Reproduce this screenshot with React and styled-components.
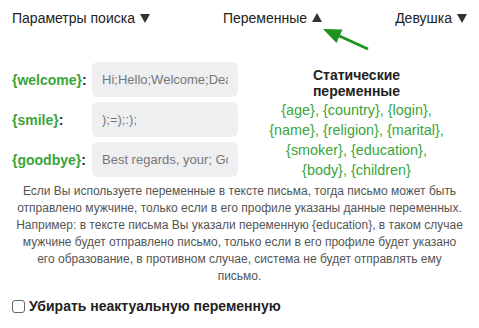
import React from "react";
import styled, { createGlobalStyle } from "styled-components";

const Global = createGlobalStyle`
  html, body { margin: 0; padding: 0; background: #fff; }
  body { font-family: "Liberation Sans", Arial, sans-serif; color: #222; }
  * { box-sizing: border-box; }
`;

const Page = styled.div`
  width: 479px;
  padding: 0 12px;
  position: relative;
`;

const Header = styled.div`
  display: flex;
  justify-content: space-between;
  align-items: center;
  height: 36px;
  font-size: 14px;
  color: #222;
`;

const Tab = styled.div`
  display: flex;
  align-items: center;
  gap: 5px;
  white-space: nowrap;
`;

const Tri = styled.span`
  width: 0;
  height: 0;
  border-left: 5.5px solid transparent;
  border-right: 5.5px solid transparent;
  ${(p) =>
    p.$up
      ? "border-bottom: 9px solid #333; margin-top: -2px;"
      : "border-top: 9px solid #333; margin-top: 1px;"}
`;

const Arrow = styled.svg`
  position: absolute;
  left: 318px;
  top: 26px;
`;

const Main = styled.div`
  display: flex;
  margin-top: 26px;
`;

const Left = styled.div`
  display: flex;
  flex-direction: column;
  gap: 5px;
  width: 226px;
`;

const Row = styled.div`
  display: flex;
  align-items: center;
`;

const Label = styled.div`
  width: 80px;
  font-size: 14px;
  font-weight: bold;
  color: #222;
  white-space: nowrap;
`;

const Var = styled.span`
  color: #3aa53a;
`;

const Field = styled.input`
  width: 146px;
  height: 35px;
  border: none;
  border-radius: 6px;
  background: #eeeff1;
  padding: 0 10px;
  font-family: "Liberation Sans", Arial, sans-serif;
  font-size: 13px;
  color: #777;
  outline: none;
  &::placeholder { color: #777; }
`;

const Right = styled.div`
  flex: 1;
  display: flex;
  flex-direction: column;
  align-items: center;
  text-align: center;
  padding-top: 5px;
  padding-left: 8px;
`;

const Title = styled.div`
  font-size: 14px;
  font-weight: bold;
  line-height: 16px;
  color: #222;
  width: 120px;
`;

const VarList = styled.div`
  font-size: 14.4px;
  line-height: 20px;
  color: #3aa53a;
  width: 182px;
  margin-top: 1px;
`;

const Note = styled.p`
  margin: 3px 0 0;
  text-align: center;
  font-size: 12px;
  line-height: 17px;
  color: #555;
  padding: 0 4px;
`;

const Check = styled.label`
  display: flex;
  align-items: center;
  gap: 4px;
  margin-top: 13px;
  font-size: 14px;
  font-weight: bold;
  color: #222;
`;

const Box = styled.span`
  width: 13px;
  height: 13px;
  border: 1px solid #666;
  border-radius: 3px;
  background: #fff;
`;

export default function App() {
  return (
    <>
      <Global />
      <Page>
        <Header>
          <Tab>Параметры поиска <Tri /></Tab>
          <Tab>Переменные <Tri $up /></Tab>
          <Tab>Девушка <Tri /></Tab>
        </Header>
        <Arrow width="56" height="28" viewBox="0 0 56 28">
          <line x1="17" y1="8" x2="50" y2="23" stroke="#1d931d" strokeWidth="3" />
          <polygon points="5,3 24.5,3.5 18.5,17" fill="#1d931d" />
        </Arrow>
        <Main>
          <Left>
            <Row>
              <Label><Var>{"{welcome}"}</Var>:</Label>
              <Field placeholder="Hi;Hello;Welcome;Dear" />
            </Row>
            <Row>
              <Label><Var>{"{smile}"}</Var>:</Label>
              <Field placeholder=");=);:);" />
            </Row>
            <Row>
              <Label><Var>{"{goodbye}"}</Var>:</Label>
              <Field placeholder="Best regards, your; Goodbye" />
            </Row>
          </Left>
          <Right>
            <Title>Статические переменные</Title>
            <VarList>
              {"{age}, {country}, {login}, {name}, {religion}, {marital}, {smoker}, {education}, {body}, {children}"}
            </VarList>
          </Right>
        </Main>
        <Note>
          Если Вы используете переменные в тексте письма, тогда письмо может быть
          отправлено мужчине, только если в его профиле указаны данные переменных.
          Например: в тексте письма Вы указали переменную {"{education}"}, в таком случае
          мужчине будет отправлено письмо, только если в его профиле будет указано
          его образование, в противном случае, система не будет отправлять ему письмо.
        </Note>
        <Check>
          <Box />
          Убирать неактуальную переменную
        </Check>
      </Page>
    </>
  );
}
